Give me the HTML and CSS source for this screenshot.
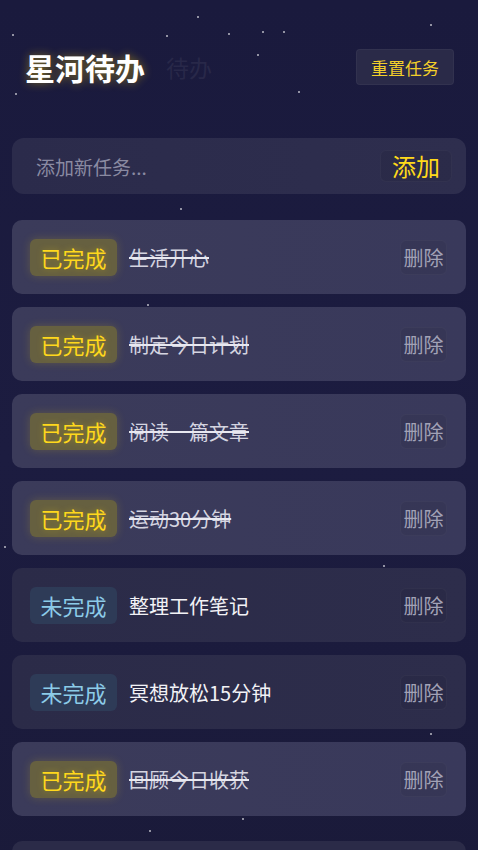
FILE: index.html
```html
<!DOCTYPE html>
<html lang="zh-CN">
<head>
    <meta charset="UTF-8">
    <meta name="viewport" content="width=device-width, initial-scale=1.0">
    <title>星河待办</title>
    <link rel="stylesheet" href="styles.css">
</head>
<body>
    <div class="stars">
        <span class="star" style="left:12px;top:34px"></span>
        <span class="star" style="left:166px;top:35px"></span>
        <span class="star" style="left:197px;top:16px"></span>
        <span class="star" style="left:228px;top:33px"></span>
        <span class="star" style="left:262px;top:31px"></span>
        <span class="star" style="left:283px;top:31px"></span>
        <span class="star" style="left:257px;top:54px"></span>
        <span class="star" style="left:430px;top:24px"></span>
        <span class="star" style="left:15px;top:93px"></span>
        <span class="star" style="left:298px;top:91px"></span>
        <span class="star" style="left:180px;top:208px"></span>
        <span class="star" style="left:147px;top:304px"></span>
        <span class="star" style="left:383px;top:565px"></span>
        <span class="star" style="left:430px;top:733px"></span>
        <span class="star" style="left:242px;top:818px"></span>
        <span class="star" style="left:149px;top:830px"></span>
        <span class="star" style="left:4px;top:546px"></span>
    </div>

    <div class="app">
        <header class="top-bar">
            <div class="brand">
                <h1 class="brand-title">星河待办</h1>
                <span class="brand-ghost">待办</span>
            </div>
            <button class="reset-btn">重置任务</button>
        </header>

        <div class="add-bar">
            <input class="add-input" type="text" placeholder="添加新任务...">
            <button class="add-btn">添加</button>
        </div>

        <ul class="task-list">
            <li class="task done">
                <span class="badge">已完成</span>
                <span class="task-text">生活开心</span>
                <button class="del-btn">删除</button>
            </li>
            <li class="task done">
                <span class="badge">已完成</span>
                <span class="task-text">制定今日计划</span>
                <button class="del-btn">删除</button>
            </li>
            <li class="task done">
                <span class="badge">已完成</span>
                <span class="task-text">阅读一篇文章</span>
                <button class="del-btn">删除</button>
            </li>
            <li class="task done">
                <span class="badge">已完成</span>
                <span class="task-text">运动30分钟</span>
                <button class="del-btn">删除</button>
            </li>
            <li class="task">
                <span class="badge">未完成</span>
                <span class="task-text">整理工作笔记</span>
                <button class="del-btn">删除</button>
            </li>
            <li class="task">
                <span class="badge">未完成</span>
                <span class="task-text">冥想放松15分钟</span>
                <button class="del-btn">删除</button>
            </li>
            <li class="task done">
                <span class="badge">已完成</span>
                <span class="task-text">回顾今日收获</span>
                <button class="del-btn">删除</button>
            </li>
        </ul>

        <div class="summary"></div>
    </div>
</body>
</html>
```

FILE: styles.css
```css
* {
    box-sizing: border-box;
}

body {
    margin: 0;
    padding: 0;
    min-height: 100vh;
    background: linear-gradient(180deg, #1a1a3d 0%, #1c1c40 50%, #1a1a39 100%);
    font-family: "Noto Sans CJK SC", "Noto Sans", sans-serif;
    color: #e8e8f0;
    overflow: hidden;
    position: relative;
}

.stars {
    position: absolute;
    inset: 0;
    pointer-events: none;
}

.star {
    position: absolute;
    width: 2px;
    height: 2px;
    border-radius: 50%;
    background: #ffffff;
    opacity: 0.7;
}

.app {
    position: relative;
    padding: 0 12px;
}

/* header */
.top-bar {
    display: flex;
    align-items: center;
    justify-content: space-between;
    height: 36px;
    margin-top: 49px;
    padding: 0 12px 0 13px;
}

.brand {
    display: flex;
    align-items: center;
}

.brand-title {
    margin: 0;
    font-size: 30px;
    font-weight: bold;
    line-height: 36px;
    color: #ffffff;
    text-shadow: 0 0 10px rgba(255, 215, 0, 0.45);
}

.brand-ghost {
    margin-left: 21px;
    font-size: 23px;
    color: #282849;
}

.reset-btn {
    width: 98px;
    height: 36px;
    border: 1px solid rgba(255, 255, 255, 0.04);
    border-radius: 4px;
    background: #2a2a48;
    color: #f3cf2a;
    font-family: inherit;
    font-size: 17px;
    padding: 0;
}

/* add task */
.add-bar {
    display: flex;
    align-items: center;
    height: 56px;
    margin-top: 53px;
    padding: 0 14px 0 24px;
    border-radius: 12px;
    background: linear-gradient(90deg, #2b2b4b 0%, #2e2e4e 100%);
}

.add-input {
    flex: 1;
    border: none;
    outline: none;
    background: transparent;
    font-family: inherit;
    font-size: 19px;
    color: #e8e8f0;
    padding: 0;
}

.add-input::placeholder {
    color: #8a8aa2;
}

.add-btn {
    width: 72px;
    height: 32px;
    border: 1px solid rgba(255, 255, 255, 0.03);
    border-radius: 6px;
    background: rgba(0, 0, 0, 0.06);
    color: #ffd91a;
    font-family: inherit;
    font-size: 24px;
    line-height: 30px;
    padding: 0;
}

/* tasks */
.task-list {
    list-style: none;
    margin: 26px 0 0;
    padding: 0;
    display: flex;
    flex-direction: column;
    gap: 13px;
}

.task {
    display: flex;
    align-items: center;
    height: 74px;
    padding: 0 19px 0 18px;
    border-radius: 10px;
    background: linear-gradient(90deg, #2b2b48 0%, #2d2d4b 100%);
}

.task.done {
    background: linear-gradient(90deg, #3b3b5a 0%, #39395b 100%);
}

.badge {
    display: flex;
    align-items: center;
    justify-content: center;
    width: 87px;
    height: 37px;
    border-radius: 6px;
    font-size: 22px;
    background: #2e3b57;
    color: #8ccbe8;
}

.task.done .badge {
    background: #666040;
    color: #ffd81c;
    box-shadow: 0 0 10px rgba(255, 215, 0, 0.18);
    text-shadow: 0 0 6px rgba(255, 215, 0, 0.35);
}

.task-text {
    margin-left: 12px;
    font-size: 20px;
    color: #f2f2f6;
}

.task.done .task-text {
    color: #d4d4e0;
    text-decoration: line-through;
    text-decoration-color: #e8e8f0;
    text-decoration-thickness: 2px;
}

.del-btn {
    margin-left: auto;
    width: 47px;
    height: 35px;
    border: 1px solid rgba(255, 255, 255, 0.03);
    border-radius: 6px;
    background: rgba(0, 0, 0, 0.05);
    color: #a2a2b6;
    font-family: inherit;
    font-size: 20px;
    padding: 0;
}

.summary {
    margin-top: 25px;
    height: 74px;
    border-radius: 10px;
    background: #2b2b48;
}
```
